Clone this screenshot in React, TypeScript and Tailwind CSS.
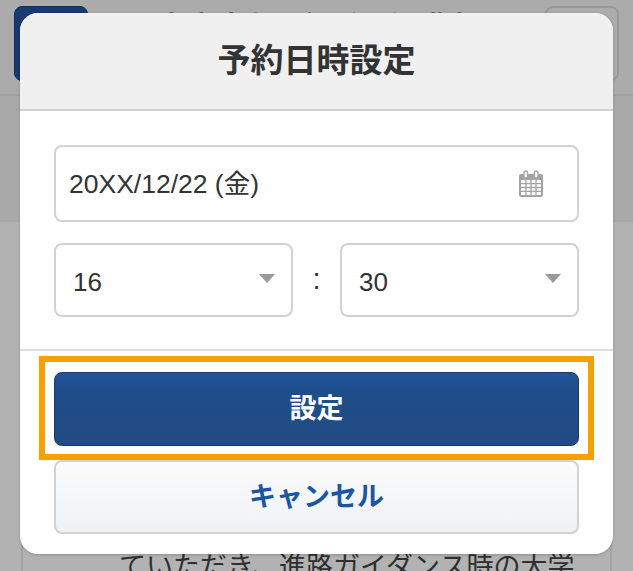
import React from "react";

const JP = '"Liberation Sans", "Noto Sans CJK JP", sans-serif';

function Calendar() {
  return (
    <svg width="26" height="28" viewBox="0 0 26 28" fill="none">
      <path d="M3 4h20a2 2 0 0 1 2 2v19a2 2 0 0 1-2 2H3a2 2 0 0 1-2-2V6a2 2 0 0 1 2-2z" fill="#a3a3a3" />
      <rect x="3" y="10" width="20" height="15" fill="#ffffff" />
      <g stroke="#a3a3a3" strokeWidth="1.3">
        <path d="M3 13.7h20M3 17.5h20M3 21.3h20M8 10v15M13 10v15M18 10v15" />
      </g>
      <rect x="6" y="1" width="3.6" height="7" rx="1.8" fill="#ffffff" stroke="#a3a3a3" strokeWidth="1.3" />
      <rect x="16.4" y="1" width="3.6" height="7" rx="1.8" fill="#ffffff" stroke="#a3a3a3" strokeWidth="1.3" />
    </svg>
  );
}

function Select({ value }: { value: string }) {
  return (
    <div className="flex h-[74px] w-[239px] items-center justify-between rounded-lg border-2 border-[#d2d2d2] bg-white pl-[17px] pr-[16px]">
      <span className="relative top-[2px] text-[26px] text-[#333333]">{value}</span>
      <span className="relative top-[-2px] h-0 w-0 border-x-[8px] border-t-[9px] border-x-transparent border-t-[#999999]" />
    </div>
  );
}

export default function App() {
  return (
    <div className="relative h-[571px] w-[633px] overflow-hidden bg-[#b2b2b2]" style={{ fontFamily: JP }}>
      <header className="flex h-[96px] items-start justify-between border-b-2 border-[#a0a0a0] bg-[#ababab] px-[14px] pt-[6px]">
        <div className="h-[75px] w-[74px] rounded-lg border border-[#102c55] bg-[#173a70]" />
        <div className="mt-[7px] whitespace-nowrap text-[30px] font-bold leading-none text-[#262626]">木本太郎 3年1組 保護者</div>
        <div className="h-[75px] w-[74px] rounded-lg border-2 border-[#999999] bg-[#ababab]" />
      </header>
      <div className="h-[126px] bg-[#a9a9a9]" />
      <div className="mx-[21px] h-[349px] border-x-2 border-[#a3a3a3] pl-[96px] pt-[330px]">
        <p className="whitespace-nowrap text-[27px] leading-[30px] text-[#2f2f2f]">ていただき、進路ガイダンス時の大学</p>
      </div>

      <div className="absolute left-[20px] top-[13px] flex h-[541px] w-[593px] flex-col overflow-hidden rounded-[18px] bg-white shadow-[0_1px_3px_rgba(0,0,0,0.2)]">
        <div className="flex h-[98px] shrink-0 items-center justify-center border-b-2 border-[#d2d2d2] bg-[#f0f0f0]">
          <h1 className="text-[33px] font-bold text-[#333333]">予約日時設定</h1>
        </div>
        <div className="flex h-[240px] shrink-0 flex-col gap-[21px] border-b-2 border-[#dddddd] px-[34px] pt-[34px]">
          <div className="flex h-[77px] items-center justify-between rounded-lg border-2 border-[#d2d2d2] bg-white pl-[13px] pr-[33px]">
            <span className="relative top-[1px] text-[26.5px] text-[#333333]">20XX/12/22 (金)</span>
            <Calendar />
          </div>
          <div className="flex items-center justify-between">
            <Select value="16" />
            <span className="text-[29px] text-[#333333]">:</span>
            <Select value="30" />
          </div>
        </div>
        <div className="flex flex-col gap-[14px] px-[34px] pt-[21px]">
          <div className="relative">
            <button className="flex h-[74px] w-full items-center justify-center rounded-lg border border-[#163a6e] bg-gradient-to-b from-[#20559c] via-[#1f4d8a] via-[25%] to-[#224b82] text-[27px] font-bold text-white">
              設定
            </button>
            <div className="absolute -bottom-[14px] -left-[15px] -right-[15px] -top-[16px] border-[6px] border-[#f5a200]" />
          </div>
          <button className="flex h-[74px] w-full items-center justify-center rounded-lg border-2 border-[#d2d2d2] bg-gradient-to-b from-[#fcfcfc] via-[#f7f8fa] via-[30%] to-[#f1f2f3] text-[27px] font-bold text-[#1a56a3]">
            キャンセル
          </button>
        </div>
      </div>
    </div>
  );
}
